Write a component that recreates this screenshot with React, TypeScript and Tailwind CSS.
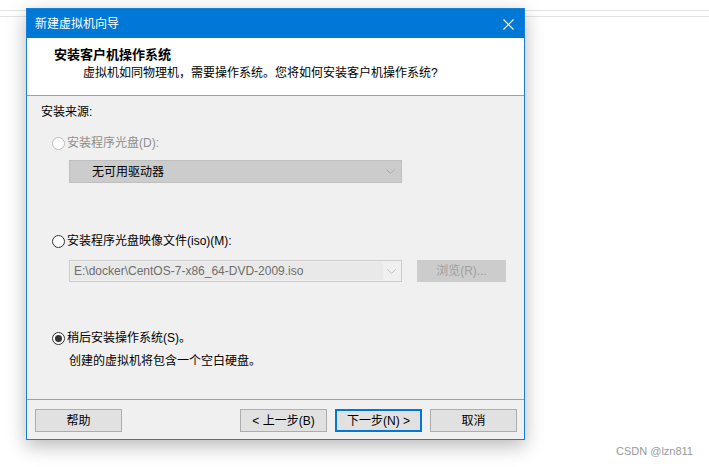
import React from "react";

function Radio({ checked = false, disabled = false }: { checked?: boolean; disabled?: boolean }) {
  return (
    <span
      className={`flex h-[13px] w-[13px] items-center justify-center rounded-full border bg-white ${
        disabled ? "border-[#bcbcbc]" : "border-[#333333]"
      }`}
    >
      {checked && <span className="h-[7px] w-[7px] rounded-full bg-[#333333]" />}
    </span>
  );
}

function Chevron({ color = "#bdbdbd" }: { color?: string }) {
  return (
    <svg width="9" height="5" viewBox="0 0 9 5" fill="none">
      <path d="M0.5 0.5 L4.5 4.5 L8.5 0.5" stroke={color} strokeWidth="1" />
    </svg>
  );
}

function Button({ label, primary = false }: { label: string; primary?: boolean }) {
  return (
    <button
      className={`flex h-[23px] w-[87px] items-center justify-center bg-[#e1e1e1] pt-[1px] text-[12px] text-black ${
        primary ? "border-2 border-[#0078d7]" : "border border-[#adadad]"
      }`}
    >
      {label}
    </button>
  );
}

export default function App() {
  return (
    <div className="relative h-[467px] w-[709px] overflow-hidden bg-white font-['Liberation_Sans','Noto_Sans_CJK_SC',sans-serif] text-[12px] leading-4">
      {/* page behind the dialog */}
      <div className="mt-[10px] h-[7px] border-y border-[#e3e3e3]" />

      {/* dialog */}
      <div className="absolute left-[26px] top-[8px] flex w-[499px] flex-col border border-[#1a7fd4] bg-[#f0f0f0] shadow-[0_6px_18px_rgba(0,0,0,0.28)]">
        {/* title bar */}
        <div className="flex h-[29px] items-center justify-between bg-[#0078d7] pl-[8px] pr-[10px] pt-[1px] text-white">
          <span className="text-[12px]">新建虚拟机向导</span>
          <svg width="11" height="11" viewBox="0 0 11 11" fill="none">
            <path d="M0.5 0.5 L10.5 10.5 M10.5 0.5 L0.5 10.5" stroke="white" strokeWidth="1.1" />
          </svg>
        </div>

        {/* header */}
        <div className="flex h-[58px] flex-col border-b border-[#a0a0a0] bg-white pl-[27px] pt-[9px]">
          <span className="text-[13px] font-bold leading-4">安装客户机操作系统</span>
          <span className="mt-[2px] pl-[29px] leading-4">
            虚拟机如同物理机，需要操作系统。您将如何安装客户机操作系统?
          </span>
        </div>

        {/* body */}
        <div className="flex h-[304px] flex-col border-b border-[#a0a0a0] pl-[14px]">
          <span className="mt-[8px]">安装来源:</span>

          <label className="mt-[15px] flex items-center gap-[2px] pl-[11px] text-[#8d8d8d]">
            <Radio disabled />
            <span>安装程序光盘(D):</span>
          </label>
          <div className="ml-[28px] mt-[9px] flex h-[23px] w-[333px] items-center justify-between border border-[#bfbfbf] bg-[#cccccc] pl-[22px] pr-[6px]">
            <span>无可用驱动器</span>
            <Chevron color="#a9a9a9" />
          </div>

          <label className="mt-[50px] flex items-center gap-[2px] pl-[11px]">
            <Radio />
            <span>安装程序光盘映像文件(iso)(M):</span>
          </label>
          <div className="mt-[11px] flex items-center">
            <div className="ml-[28px] flex h-[22px] w-[333px] items-center border border-[#cccccc] bg-[#f0f0f0] p-[1px]">
              <div className="flex h-full w-[312px] items-center bg-[#e9e9e9] pl-[3px] text-[#6d6d6d]">
                E:\docker\CentOS-7-x86_64-DVD-2009.iso
              </div>
              <div className="flex flex-1 justify-center">
                <Chevron />
              </div>
            </div>
            <div className="ml-[15px] flex h-[22px] w-[89px] items-center justify-center border border-[#cccccc] bg-[#cccccc] text-[#a0a0a0]">
              浏览(R)...
            </div>
          </div>

          <label className="mt-[48px] flex items-center gap-[2px] pl-[11px]">
            <Radio checked />
            <span>稍后安装操作系统(S)。</span>
          </label>
          <span className="mt-[7px] pl-[28px]">创建的虚拟机将包含一个空白硬盘。</span>
        </div>

        {/* footer */}
        <div className="flex h-[39px] items-start justify-between pl-[8px] pr-[7px] pt-[9px]">
          <Button label="帮助" />
          <div className="flex gap-[8px]">
            <Button label="< 上一步(B)" />
            <Button label="下一步(N) >" primary />
            <Button label="取消" />
          </div>
        </div>
      </div>

      {/* watermark */}
      <span className="absolute bottom-[8px] right-[16px] text-[11px] text-[#9a9a9a]">CSDN @lzn811</span>
    </div>
  );
}
